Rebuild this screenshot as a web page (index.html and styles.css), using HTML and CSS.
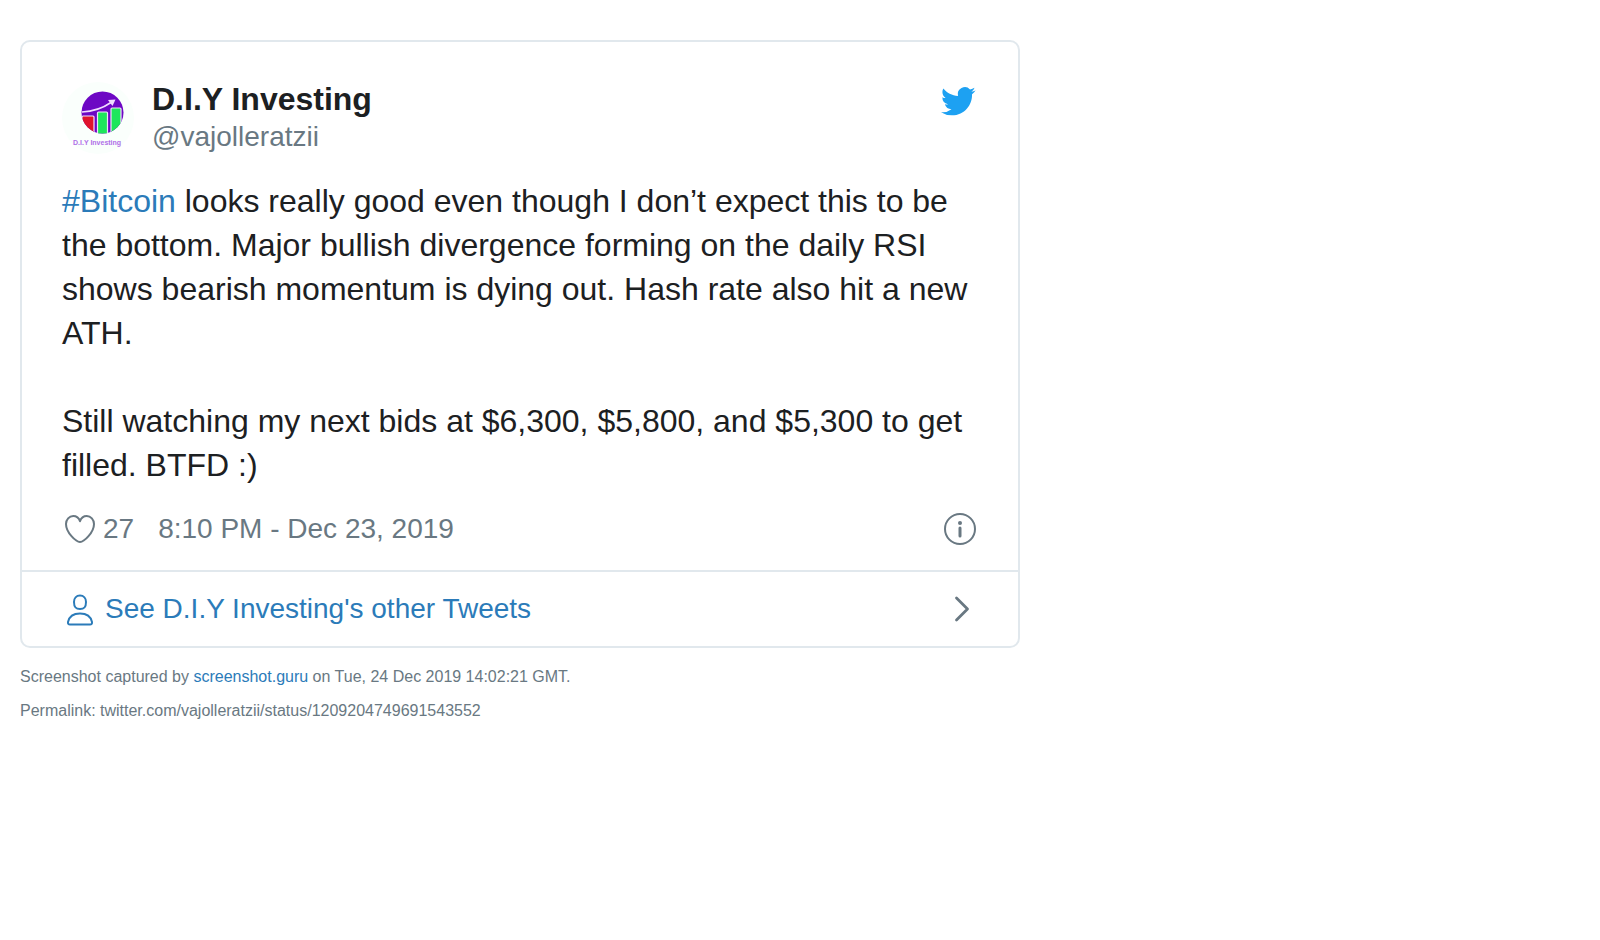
FILE: index.html
```html
<!DOCTYPE html>
<html lang="en">
<head>
    <meta charset="UTF-8">
    <meta name="viewport" content="width=device-width, initial-scale=1.0">
    <title>D.I.Y Investing on Twitter</title>
    <link rel="stylesheet" href="styles.css">
</head>
<body>
    <article class="tweet">
        <div class="tweet-main">
            <header class="author">
                <svg class="avatar" viewBox="0 0 72 72" aria-hidden="true">
                    <defs>
                        <clipPath id="disc"><circle cx="40.500" cy="30.500" r="21"/></clipPath>
                    </defs>
                    <circle cx="36" cy="36" r="36" fill="#fafffc"/>
                    <g clip-path="url(#disc)">
                        <rect x="19" y="9" width="44" height="44" fill="#6d08c4"/>
                        <g stroke="#f0e2fc" stroke-width="1.200">
                            <rect x="20" y="34" width="12" height="20" rx="1" fill="#e0142c"/>
                            <rect x="35.500" y="30" width="10" height="24" rx="1" fill="#1ee65c"/>
                            <rect x="49" y="26" width="10" height="28" rx="1" fill="#1ee65c"/>
                        </g>
                        <path d="M20 30C31 29.500 41 26 49 20.500" fill="none" stroke="#f0dcff" stroke-width="1.600"/>
                        <path d="M46 18l7.500-.500-3 6.500z" fill="#f0dcff"/>
                    </g>
                    <text x="11" y="63" class="avatar-text">D.I.Y Investing</text>
                </svg>
                <div class="names">
                    <div class="name">D.I.Y Investing</div>
                    <div class="handle">@vajolleratzii</div>
                </div>
                <svg class="icon bird" viewBox="0 0 36 36" aria-hidden="true">
                    <path transform="translate(-1 2) scale(1.440)" d="M23.953 4.570a10 10 0 01-2.825.775 4.958 4.958 0 002.163-2.723c-.951.555-2.005.959-3.127 1.184a4.920 4.920 0 00-8.384 4.482C7.690 8.095 4.067 6.130 1.640 3.162a4.822 4.822 0 00-.666 2.475c0 1.710.870 3.213 2.188 4.096a4.904 4.904 0 01-2.228-.616v.060a4.923 4.923 0 003.946 4.827 4.996 4.996 0 01-2.212.085 4.936 4.936 0 004.604 3.417 9.867 9.867 0 01-6.102 2.105c-.390 0-.779-.023-1.170-.067a13.995 13.995 0 007.557 2.209c9.053 0 13.998-7.496 13.998-13.985 0-.210 0-.420-.015-.630A9.935 9.935 0 0024 4.590z"/>
                </svg>
            </header>

            <p class="text"><a href="#">#Bitcoin</a> looks really good even though I don’t expect this to be the bottom. Major bullish divergence forming on the daily RSI shows bearish momentum is dying out. Hash rate also hit a new ATH.<br><br>Still watching my next bids at $6,300, $5,800, and $5,300 to get filled. BTFD :)</p>

            <div class="meta">
                <button class="like" type="button" aria-label="Like">
                    <svg class="icon" viewBox="0 0 36 36" aria-hidden="true">
                        <path d="M18 31C14 31 4 21.500 4 13 4 8.500 7.300 5 11.200 5 14.500 5 17 7.300 18 10.300 19 7.300 21.500 5 24.800 5 28.700 5 32 8.500 32 13 32 21.500 22 31 18 31z"/>
                    </svg>
                    <span>27</span>
                </button>
                <time datetime="2019-12-23T20:10">8:10 PM - Dec 23, 2019</time>
                <a class="info" href="#" aria-label="Twitter Ads info and privacy">
                    <svg class="icon" viewBox="0 0 36 36" aria-hidden="true">
                        <circle cx="18" cy="18" r="15"/>
                        <circle cx="18" cy="12" r="2" class="dot"/>
                        <path d="M18 17v8" stroke-width="3"/>
                    </svg>
                </a>
            </div>
        </div>

        <a class="more" href="#">
            <svg class="icon" viewBox="0 0 36 36" aria-hidden="true">
                <path d="M18 4.500c3.700 0 6 2.800 6 6.500C24 16 22.500 18 18 18s-6-2-6-7C12 7.300 14.300 4.500 18 4.500zM8 33.500h20c1.500 0 2.300-1 2-2.500C28.800 25.500 24.300 22.500 18 22.500S7.200 25.500 6 31c-.300 1.500.500 2.500 2 2.500z"/>
            </svg>
            <span>See D.I.Y Investing's other Tweets</span>
            <svg class="icon chevron" viewBox="0 0 36 36" aria-hidden="true">
                <path d="M14.500 7L25.500 18 14.500 29" stroke-width="2.800"/>
            </svg>
        </a>
    </article>

    <footer class="caption">
        <p>Screenshot captured by <a href="#">screenshot.guru</a> on Tue, 24 Dec 2019 14:02:21 GMT.</p>
        <p>Permalink: twitter.com/vajolleratzii/status/1209204749691543552</p>
    </footer>
</body>
</html>
```
FILE: styles.css
```css
/* General Styles */
* {
    box-sizing: border-box;
}

body {
    margin: 0;
    padding: 40px 20px;
    font-family: "Liberation Sans", Arial, sans-serif;
    background-color: #fff;
    color: #1c2022;
}

a {
    color: #2b7bb9;
    text-decoration: none;
}

p {
    margin: 0;
}

.icon {
    display: block;
    flex: none;
    width: 36px;
    height: 36px;
    fill: none;
    stroke: currentColor;
    stroke-width: 2;
    stroke-linecap: round;
    stroke-linejoin: round;
}

/* Tweet card */
.tweet {
    max-width: 1000px;
    border: 2px solid #e1e8ed;
    border-radius: 10px;
}

.tweet-main {
    padding: 40px 40px 22px;
}

.author {
    display: flex;
    align-items: flex-start;
}

.avatar {
    width: 72px;
    height: 72px;
    margin-right: 18px;
}

.avatar-text {
    font-size: 7px;
    font-weight: bold;
    fill: #b070e8;
}

.names {
    flex: 1;
}

.name {
    font-size: 32px;
    line-height: 34px;
    font-weight: bold;
}

.handle {
    font-size: 28px;
    line-height: 42px;
    color: #697882;
}

.bird {
    overflow: visible;
    fill: #1da1f2;
    stroke: none;
}

.text {
    margin-top: 21px;
    font-size: 32px;
    line-height: 44px;
}

.meta {
    display: flex;
    align-items: center;
    gap: 24px;
    margin-top: 23px;
    font-size: 28px;
    line-height: 38px;
    color: #697882;
}

.like {
    display: flex;
    align-items: center;
    gap: 5px;
    padding: 0;
    border: none;
    background: none;
    font: inherit;
    color: inherit;
    cursor: pointer;
}

.info {
    margin-left: auto;
    color: #697882;
}

.dot {
    fill: currentColor;
    stroke: none;
}

.more {
    display: flex;
    align-items: center;
    gap: 7px;
    padding: 18px 40px;
    border-top: 2px solid #e1e8ed;
    font-size: 28px;
    line-height: 38px;
}

.chevron {
    margin-left: auto;
    color: #697882;
}

.more:hover span,
.caption a:hover {
    text-decoration: underline;
}

/* Caption */
.caption {
    margin-top: 20px;
    font-size: 16px;
    line-height: 18px;
    color: #697882;
}

.caption p + p {
    margin-top: 16px;
}
```
